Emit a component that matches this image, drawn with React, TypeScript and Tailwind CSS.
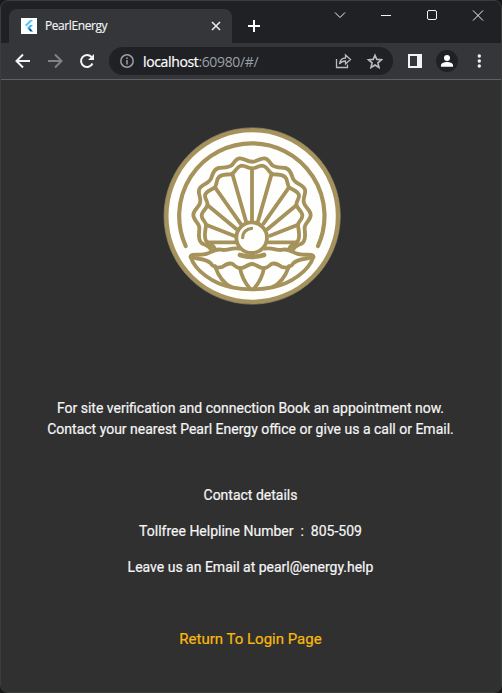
import React from "react";

const HALF_OUTER =
  "M276 113C262 114 254 103 240 103C226 103 222 118 215 124C205 132 190 130 176 132C160 135 158 152 153 164C147 180 120 182 117 198C114 212 125 222 120 237C117 250 101 256 100 272C99 289 118 296 118 312C118 328 112 345 124 356C134 364 148 364 154 378";
const HALF_INNER =
  "M276 133C264 134 258 125 246 125C231 126 227 142 217 149C205 155 184 146 174 163C168 173 171 185 163 191C152 199 135 201 135 216C135 228 146 234 142 245C139 255 125 262 125 275C125 288 139 292 138 305C136 320 131 338 138 350C145 361 158 358 165 375";

function HalfShell() {
  return (
    <>
      <path d={HALF_OUTER} />
      <path d={HALF_INNER} />
      <path d="M217 149L258 292M165 190L241 298M143 244L229 315M138 302L222 335M145 355H226" />
      <path d="M92 398C92 387 124 397 144 388C160 380 170 374 183 377C200 382 211 370 238 374" />
      <path d="M92 399C105 440 160 480 215 490C235 494 255 496 276 496" />
      <path d="M92 399C110 405 140 404 152 418C160 430 175 433 188 428C200 421 208 415 218 420C228 430 240 436 252 430C262 425 268 420 276 420" />
      <path d="M165 427C175 455 192 480 215 489M240 432C245 460 258 480 270 494" />
    </>
  );
}

function PearlLogo() {
  return (
    <svg className="ml-[3px] size-[184px] shrink-0" viewBox="0 0 552 552" fill="none" stroke="#a6935b" strokeWidth="11.500" strokeLinecap="round" strokeLinejoin="round">
      <circle cx="276.500" cy="276" r="264.500" stroke="#77746a" strokeWidth="3" />
      <circle cx="276.500" cy="276" r="257.500" fill="#fefefc" strokeWidth="13" />
      <path d="M77 366A218 218 0 1 1 474 366" strokeWidth="12.500" />
      <HalfShell />
      <g transform="translate(552 0) scale(-1 1)">
        <HalfShell />
      </g>
      <path d="M276 134V292" />
      <path d="M240 393Q276 404 312 393" strokeWidth="14" />
      <circle cx="275" cy="341" r="46" fill="#fefefc" />
      <path d="M248 341C248 325 260 314 275 313" strokeWidth="9.500" />
    </svg>
  );
}

function Favicon() {
  return (
    <svg className="ml-3 size-4 bg-white" viewBox="0 0 16 16">
      <path d="M9 2h3L5.500 8.500 4 7z" fill="#54c5f8" />
      <path d="M9 7h3L9 10l-1.500 1.500L6 10z" fill="#35b5f0" />
      <path d="M7.500 11.500L9 10l3 3.500H9.300z" fill="#01579b" />
    </svg>
  );
}

function TitleBar() {
  return (
    <div className="flex h-[43px] shrink-0">
      <div className="mt-[9px] ml-2 flex w-[223px] items-center rounded-t-lg bg-[#35363a]">
        <Favicon />
        <span className="ml-2 flex-1 font-['Open_Sans',sans-serif] text-[12px] tracking-[-0.42px] text-[#f1f3f4] [-webkit-text-stroke:0.15px]">PearlEnergy</span>
        <svg className="mr-[11px] size-[10px]" viewBox="0 0 10 10" stroke="#e8eaed" strokeWidth="1.600">
          <path d="M1 1l8 8M9 1L1 9" />
        </svg>
      </div>
      <svg className="mt-5 ml-4 h-3 w-3" viewBox="0 0 12 12" stroke="#fff" strokeWidth="2">
        <path d="M6 0v12M0 6h12" />
      </svg>
      <svg className="mt-[9px] ml-[74px] h-3 w-[150px]" viewBox="334 9 150 12" fill="none" stroke="#f1f3f4" strokeWidth="1">
        <path d="M335 12.500l5 5 5-5M381 15.500h10M473 10.500l10 10M483 10.500l-10 10" />
        <rect x="427.500" y="10.500" width="9" height="9" rx="1.500" />
      </svg>
    </div>
  );
}

function Toolbar() {
  return (
    <div className="flex h-9 shrink-0 items-center bg-[#35363a]">
      <svg className="ml-[14px] h-4 w-20" viewBox="15 53 80 16" fill="none" stroke="#f1f3f4" strokeWidth="2">
        <path d="M30 61H17M23 54.500L16.500 61l6.500 6.500" />
        <path d="M48 61h13M55 54.500l6.500 6.500-6.500 6.500" stroke="#808286" />
        <path d="M92.500 63.500A6 6 0 1 1 91.500 57" />
        <path d="M94 54v6h-6z" fill="#f1f3f4" stroke="none" />
      </svg>
      <div className="ml-[14px] flex h-7 w-[284px] items-center rounded-full bg-[#202124]">
        <svg className="ml-[11px] size-[14px]" viewBox="0 0 14 14" fill="none" stroke="#9aa0a6" strokeWidth="1.500">
          <circle cx="7" cy="7" r="6.200" />
          <path d="M7 6v4.500M7 3.500v1.500" />
        </svg>
        <span className="ml-[9px] flex-1 whitespace-nowrap font-['Open_Sans',sans-serif] text-[14px] tracking-[-0.36px] text-white">
          <span className="[-webkit-text-stroke:0.2px]">localhost</span>
          <span className="text-[#9aa0a6]">:60980/#/</span>
        </span>
        <svg className="mr-[10px] h-4 w-12" viewBox="335 53 48 16" fill="none" stroke="#b9bcc0" strokeWidth="1.300">
          <path d="M336.500 59v8.500h11v-3M339.500 64c.5-4 3-6 6-6v-3l5 4.500-5 4.500v-3c-3 0-4.500.8-6 3z" />
          <path d="M375 55.200l1.800 4.200 4.700.4-3.600 3.100 1.100 4.600-4-2.500-4 2.500 1.100-4.600-3.600-3.100 4.700-.4z" strokeWidth="1.600" />
        </svg>
      </div>
      <svg className="ml-[15px] h-[14px] w-[14px]" viewBox="0 0 14 14" fill="#f1f3f4">
        <path fillRule="evenodd" d="M0 0h14v14H0zM2 2v10h7V2z" />
      </svg>
      <svg className="ml-[14px] size-[22px]" viewBox="0 0 22 22" fill="#fff">
        <circle cx="11" cy="11" r="11" fill="#202124" />
        <circle cx="11" cy="8" r="3" />
        <path d="M5 16.800v-1.500c0-2.200 3.500-3.300 6-3.300s6 1.100 6 3.300v1.500z" />
      </svg>
      <svg className="ml-[19px] h-[14px] w-1" viewBox="0 0 4 14" fill="#f1f3f4">
        <circle cx="2.300" cy="2" r="1.700" />
        <circle cx="2.300" cy="7" r="1.700" />
        <circle cx="2.300" cy="12" r="1.700" />
      </svg>
    </div>
  );
}

export default function App() {
  return (
    <div className="h-[693px] w-[502px] overflow-hidden bg-[#181818]">
      <div className="flex h-full flex-col overflow-hidden rounded-lg border border-[#3b3d3c] bg-[#202124]">
        <div className="-mt-px flex flex-col">
          <TitleBar />
          <Toolbar />
        </div>
        <main className="flex flex-1 flex-col items-center border-t border-[#606164] bg-[#303030] pt-11 pr-px font-[Roboto,sans-serif] text-[14px] text-[#f5f5f5] [-webkit-text-stroke:0.2px]">
          <PearlLogo />
          <p className="mt-[90px] whitespace-nowrap text-center leading-[21px]">
            <span>For site verification and connection Book an appointment now.</span>
            <br />
            <span>Contact your nearest Pearl Energy office or give us a call or Email.</span>
          </p>
          <p className="mt-[45px] leading-[21px]">Contact details</p>
          <p className="mt-[15px] whitespace-pre leading-[21px]">{"Tollfree Helpline Number  :  805-509"}</p>
          <p className="mt-[15px] leading-[21px]">Leave us an Email at pearl@energy.help</p>
          <button className="mt-[51px] text-[15px] leading-[21px] text-[#f9b90c]">Return To Login Page</button>
        </main>
      </div>
    </div>
  );
}
